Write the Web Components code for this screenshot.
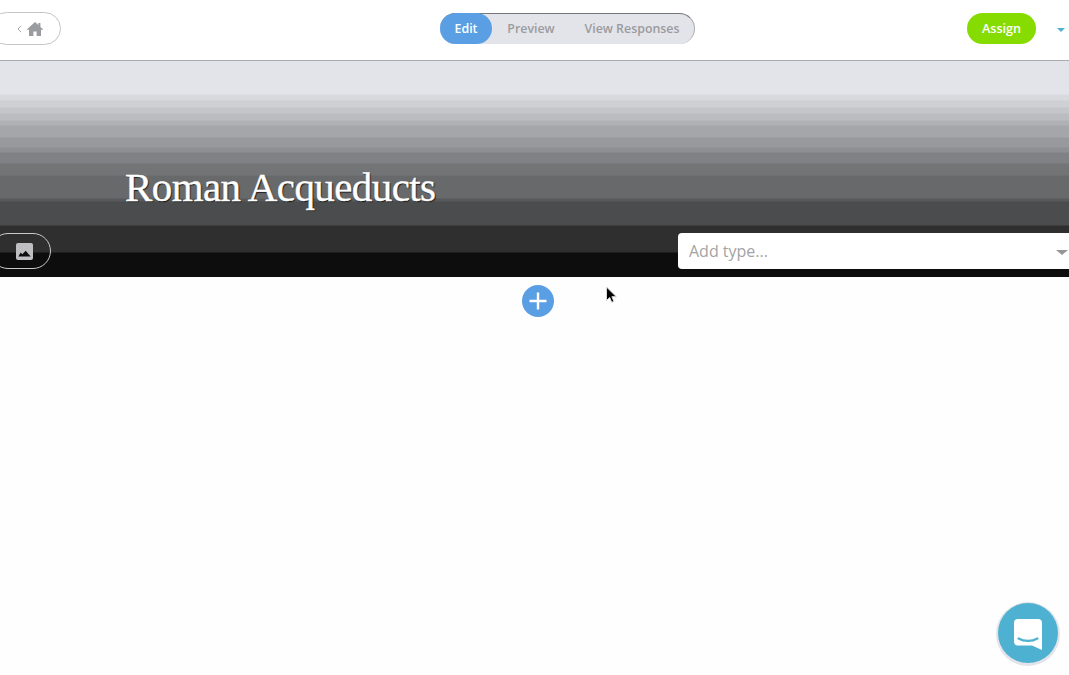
<!DOCTYPE html>
<html>
<head>
<meta charset="utf-8">
<style>
    html, body { margin: 0; padding: 0; }
    body {
        width: 1069px;
        height: 675px;
        overflow: hidden;
        background: #fefefe;
        font-family: "Open Sans", sans-serif;
        position: relative;
    }
</style>
</head>
<body>
<app-topbar></app-topbar>
<lesson-hero title-text="Roman Acqueducts"></lesson-hero>
<add-row></add-row>
<mouse-cursor></mouse-cursor>
<chat-launcher></chat-launcher>

<script>
class AppTopbar extends HTMLElement {
    constructor() {
        super();
        this.attachShadow({ mode: 'open' });
        this.shadowRoot.innerHTML = `
        <style>
            :host {
                display: grid;
                grid-template-columns: 440px 255px 1fr;
                align-items: center;
                box-sizing: border-box;
                height: 61px;
                border-bottom: 1px solid #a9aaad;
                background: #fff;
                padding-bottom: 3px;
            }
            .back {
                display: flex;
                align-items: center;
                gap: 5px;
                box-sizing: border-box;
                width: 71px;
                height: 33px;
                margin-left: -10px;
                padding-left: 26px;
                border: 1px solid #c4c5c9;
                border-radius: 17px;
            }
            .back svg { display: block; }
            .tabs {
                display: flex;
                align-items: stretch;
                box-sizing: border-box;
                height: 31px;
                background: #e3e4e9;
                border-radius: 16px;
                border-top: 1px solid #77787c;
                border-right: 1px solid #a9aaad;
                font-size: 12.4px;
                font-weight: 600;
                color: #9b9b9f;
            }
            .tabs span { display: flex; align-items: center; justify-content: center; white-space: nowrap; }
            .tabs .on {
                width: 52px;
                margin-top: -1px;
                background: #5a9fe3;
                color: #fff;
                border-radius: 16px;
            }
            .tabs .p { width: 78px; padding-bottom: 2px; }
            .tabs .v { width: 100px; margin-left: 12px; padding-bottom: 2px; }
            .right { display: flex; align-items: center; justify-content: flex-end; }
            .assign {
                display: flex;
                align-items: center;
                justify-content: center;
                width: 69px;
                height: 31px;
                border-radius: 16px;
                background: #86dc00;
                color: #fff;
                font-size: 12.6px;
                font-weight: 600;
            }
            .caret {
                width: 0;
                height: 0;
                margin: 2px 4px 0 21px;
                border-left: 4px solid transparent;
                border-right: 4px solid transparent;
                border-top: 4px solid #4fb1d1;
            }
        </style>
        <div class="back">
            <svg width="5" height="8" viewBox="0 0 5 8"><path d="M4 .8 1 4l3 3.2" fill="none" stroke="#a5a6a9" stroke-width="1"/></svg>
            <svg width="16" height="14" viewBox="0 0 16 14"><path d="M8 0 0 7.200l.9 1L2 7.200V14h4.400V9.400h3.200V14H14V7.200l1.100 1 .9-1L13.400 4.900V1h-2v2.100z" fill="#9b9ca0"/></svg>
        </div>
        <div class="tabs">
            <span class="on">Edit</span>
            <span class="p">Preview</span>
            <span class="v">View Responses</span>
        </div>
        <div class="right">
            <div class="assign">Assign</div>
            <div class="caret"></div>
        </div>`;
    }
}

class LessonHero extends HTMLElement {
    constructor() {
        super();
        this.attachShadow({ mode: 'open' });
        const title = this.getAttribute('title-text');
        this.shadowRoot.innerHTML = `
        <style>
            :host {
                display: flex;
                flex-direction: column;
                justify-content: flex-end;
                box-sizing: border-box;
                height: 216px;
                overflow: hidden;
                padding-bottom: 8px;
                background: linear-gradient(to bottom,
                    #e3e4e9 0 33px, #d8d9dd 34px 39px, #cfd0d4 40px 46px,
                    #c5c6ca 47px 52px, #bbbcc0 53px 59px, #b0b1b5 60px 64px,
                    #a5a6a9 65px 76px, #98999c 77px 86px, #8e8f92 87px 91px,
                    #808184 92px 102px, #737476 103px 114px, #68696b 115px 137px,
                    #58595b 138px 140px, #4b4c4e 141px 164px, #2f2f30 165px 191px,
                    #0d0d0d 192px 216px);
            }
            h1 {
                margin: 0 0 22px 125px;
                font-family: "Liberation Serif", serif;
                font-size: 41px;
                line-height: 48px;
                font-weight: 400;
                color: #fff;
                letter-spacing: -0.6px;
                -webkit-text-stroke: 0.4px #fff;
                text-shadow: 1px 1px 1px #111;
            }
            .row { display: flex; align-items: center; justify-content: space-between; }
            .photo {
                display: flex;
                align-items: center;
                box-sizing: border-box;
                width: 61px;
                height: 36px;
                margin-left: -10px;
                padding-left: 25px;
                border: 1px solid #c9c9cc;
                border-radius: 18px;
            }
            .photo svg { display: block; }
            type-select { margin-right: -10px; }
        </style>
        <h1>${title}</h1>
        <div class="row">
            <div class="photo">
                <svg width="17" height="17" viewBox="0 0 17 17">
                    <rect width="17" height="17" rx="2" fill="#bfbfc2"/>
                    <path d="M2.300 13.600 4.700 9.500 6.300 11.300 9.700 7.700 14.700 13.600z" fill="#0d0d0d"/>
                </svg>
            </div>
            <type-select placeholder="Add type..."></type-select>
        </div>`;
    }
}

class TypeSelect extends HTMLElement {
    constructor() {
        super();
        this.attachShadow({ mode: 'open' });
        this.shadowRoot.innerHTML = `
        <style>
            :host {
                display: flex;
                align-items: center;
                justify-content: space-between;
                box-sizing: border-box;
                width: 401px;
                height: 36px;
                padding: 0 11px 0 11px;
                background: #fff;
                border-radius: 4px;
                font-size: 16px;
                color: #a3a3a3;
            }
            .arrow {
                width: 0;
                height: 0;
                margin-top: 2px;
                border-left: 6px solid transparent;
                border-right: 6px solid transparent;
                border-top: 5px solid #969696;
            }
        </style>
        <span>${this.getAttribute('placeholder')}</span>
        <span class="arrow"></span>`;
    }
}

class AddRow extends HTMLElement {
    constructor() {
        super();
        this.attachShadow({ mode: 'open' });
        this.shadowRoot.innerHTML = `
        <style>
            :host { display: flex; justify-content: center; padding: 8px 0 0 7px; }
            svg { display: block; }
        </style>
        <svg width="32" height="32" viewBox="0 0 32 32">
            <circle cx="16" cy="16" r="16" fill="#5a9fe3"/>
            <path d="M16 7.500v17M7.500 16h17" stroke="#fff" stroke-width="2.400" fill="none"/>
        </svg>`;
    }
}

class MouseCursor extends HTMLElement {
    constructor() {
        super();
        this.attachShadow({ mode: 'open' });
        this.shadowRoot.innerHTML = `
        <style>
            :host { position: absolute; left: 605px; top: 286px; width: 13px; height: 19px; }
            svg { display: block; }
        </style>
        <svg width="13" height="19" viewBox="0 0 13 19">
            <path d="M1.500 1v13.500l3.200-3 2 4.800 2.200-.9-2-4.700h4.400z" fill="#000" stroke="#d8d8d8" stroke-width="1"/>
        </svg>`;
    }
}

class ChatLauncher extends HTMLElement {
    constructor() {
        super();
        this.attachShadow({ mode: 'open' });
        this.shadowRoot.innerHTML = `
        <style>
            :host {
                position: absolute;
                left: 998px;
                top: 603px;
                width: 60px;
                height: 60px;
                border-radius: 50%;
                background: #4fb1d1;
                box-shadow: 0 1px 0 2px #e3e4e9;
                display: flex;
                align-items: center;
                justify-content: center;
            }
            svg { display: block; margin-top: 3px; }
        </style>
        <svg width="28" height="31" viewBox="0 0 28 31">
            <path d="M4 0h20a4 4 0 0 1 4 4v27l-10-4.500H4a4 4 0 0 1-4-4V4a4 4 0 0 1 4-4z" fill="#fff"/>
            <path d="M4.500 19.500c5.500 3.200 13.500 3.200 19 0" fill="none" stroke="#4fb1d1" stroke-width="2.200" stroke-linecap="round"/>
        </svg>`;
    }
}

customElements.define('type-select', TypeSelect);
customElements.define('app-topbar', AppTopbar);
customElements.define('lesson-hero', LessonHero);
customElements.define('add-row', AddRow);
customElements.define('mouse-cursor', MouseCursor);
customElements.define('chat-launcher', ChatLauncher);
</script>
</body>
</html>
